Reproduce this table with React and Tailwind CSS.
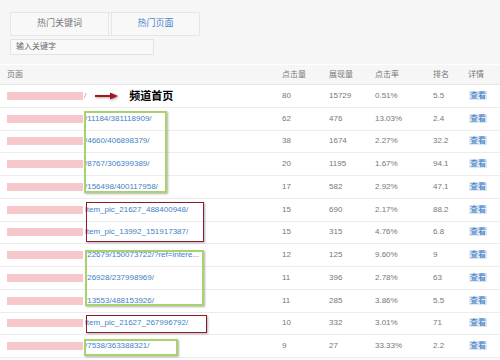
import React from "react";

const rows = [
  { path: "/", clicks: 80, views: 15729, ctr: "0.51%", rank: "5.5", home: true },
  { path: "/11184/381118909/", clicks: 62, views: 476, ctr: "13.03%", rank: "2.4" },
  { path: "/4660/406898379/", clicks: 38, views: 1674, ctr: "2.27%", rank: "32.2" },
  { path: "/8767/306399389/", clicks: 20, views: 1195, ctr: "1.67%", rank: "94.1" },
  { path: "/156498/400117958/", clicks: 17, views: 582, ctr: "2.92%", rank: "47.1" },
  { path: "item_pic_21627_488400948/", clicks: 15, views: 690, ctr: "2.17%", rank: "88.2" },
  { path: "item_pic_13992_151917387/", clicks: 15, views: 315, ctr: "4.76%", rank: "6.8" },
  { path: "/22679/150073722/?ref=intere...", clicks: 12, views: 125, ctr: "9.60%", rank: "9" },
  { path: "/26928/237998969/", clicks: 11, views: 396, ctr: "2.78%", rank: "63" },
  { path: "/13553/488153926/", clicks: 11, views: 285, ctr: "3.86%", rank: "5.5" },
  { path: "item_pic_21627_267996792/", clicks: 10, views: 332, ctr: "3.01%", rank: "71" },
  { path: "/7538/363388321/", clicks: 9, views: 27, ctr: "33.33%", rank: "2.2" },
];

const cols = "grid grid-cols-[275px_47px_46px_58px_35px_1fr] items-center pl-[7px]";

// annotation boxes drawn over the table
const marks = [
  { left: 84, top: 111, width: 83, height: 82, color: "green" },
  { left: 86, top: 202, width: 118, height: 40, color: "red" },
  { left: 85, top: 250, width: 119, height: 56, color: "green" },
  { left: 86, top: 315, width: 121, height: 18, color: "red" },
  { left: 84, top: 339, width: 94, height: 17, color: "green" },
];

const Row = ({ row }) => (
  <div className={`${cols} h-[22.75px] border-b border-[#ececec] text-[8px] text-[#777]`}>
    <div className="flex items-center">
      <span className="inline-block w-[76px] h-[8px] bg-[#f7c8cb]" />
      {row.home ? (
        <>
          <span className="ml-[1px] text-[#999]">/</span>
          <svg width="24" height="8" viewBox="0 0 24 8" className="ml-[9px] drop-shadow-[1px_1px_1px_rgba(0,0,0,0.35)]">
            <line x1="0" y1="4" x2="17" y2="4" stroke="#a3161c" strokeWidth="2" />
            <path d="M15 0.5 L23 4 L15 7.5 Z" fill="#a3161c" />
          </svg>
          <span className="ml-[10px] text-[11px] font-bold text-black">频道首页</span>
        </>
      ) : (
        <span className="ml-[2px] text-[#3f7fc6] whitespace-nowrap">{row.path}</span>
      )}
    </div>
    <div>{row.clicks}</div>
    <div>{row.views}</div>
    <div>{row.ctr}</div>
    <div>{row.rank}</div>
    <div>
      <span className="ml-[1px] px-[1px] bg-[#dde9f6] text-[#3a78c2]">查看</span>
    </div>
  </div>
);

export default function App() {
  return (
    <div
      className="relative w-[500px] h-[360px] overflow-hidden bg-white"
      style={{ fontFamily: '"Liberation Sans", "Noto Sans CJK SC", sans-serif' }}
    >
      <div className="h-[65px] bg-[#f6f6f6] pt-[12px] pl-[10px] border-b border-white">
        <div className="flex w-[190px] h-[24px] border border-[#e6e6e6] bg-[#f8f8f8] text-[9px]">
          <div className="w-[98px] flex items-center justify-center border-r border-[#e6e6e6] text-[#777]">
            热门关键词
          </div>
          <div className="flex-1 flex items-center justify-center ml-[2px] border-l border-[#e6e6e6] text-[#3f84cc]">
            热门页面
          </div>
        </div>
        <div className="mt-[3px] w-[144px] h-[16px] border border-[#e3e3e3] bg-[#f9f9f9] flex items-center pl-[5px] text-[8px] text-[#666]">
          输入关键字
        </div>
      </div>
      <div className={`${cols} h-[20px] bg-[#f6f6f6] border-b border-[#e6e6e6] text-[8px] text-[#777]`}>
        <div>页面</div>
        <div>点击量</div>
        <div>展现量</div>
        <div>点击率</div>
        <div>排名</div>
        <div>详情</div>
      </div>
      {rows.map((row, i) => (
        <Row key={i} row={row} />
      ))}
      {marks.map((m, i) => (
        <div
          key={i}
          className={
            m.color === "green"
              ? "absolute border-2 border-[#a8d26e] shadow-[1px_1px_2px_rgba(0,0,0,0.3)]"
              : "absolute border-[1.5px] border-[#8c1c2c] shadow-[1px_1px_2px_rgba(0,0,0,0.3)]"
          }
          style={{ left: m.left, top: m.top, width: m.width, height: m.height }}
        />
      ))}
    </div>
  );
}
